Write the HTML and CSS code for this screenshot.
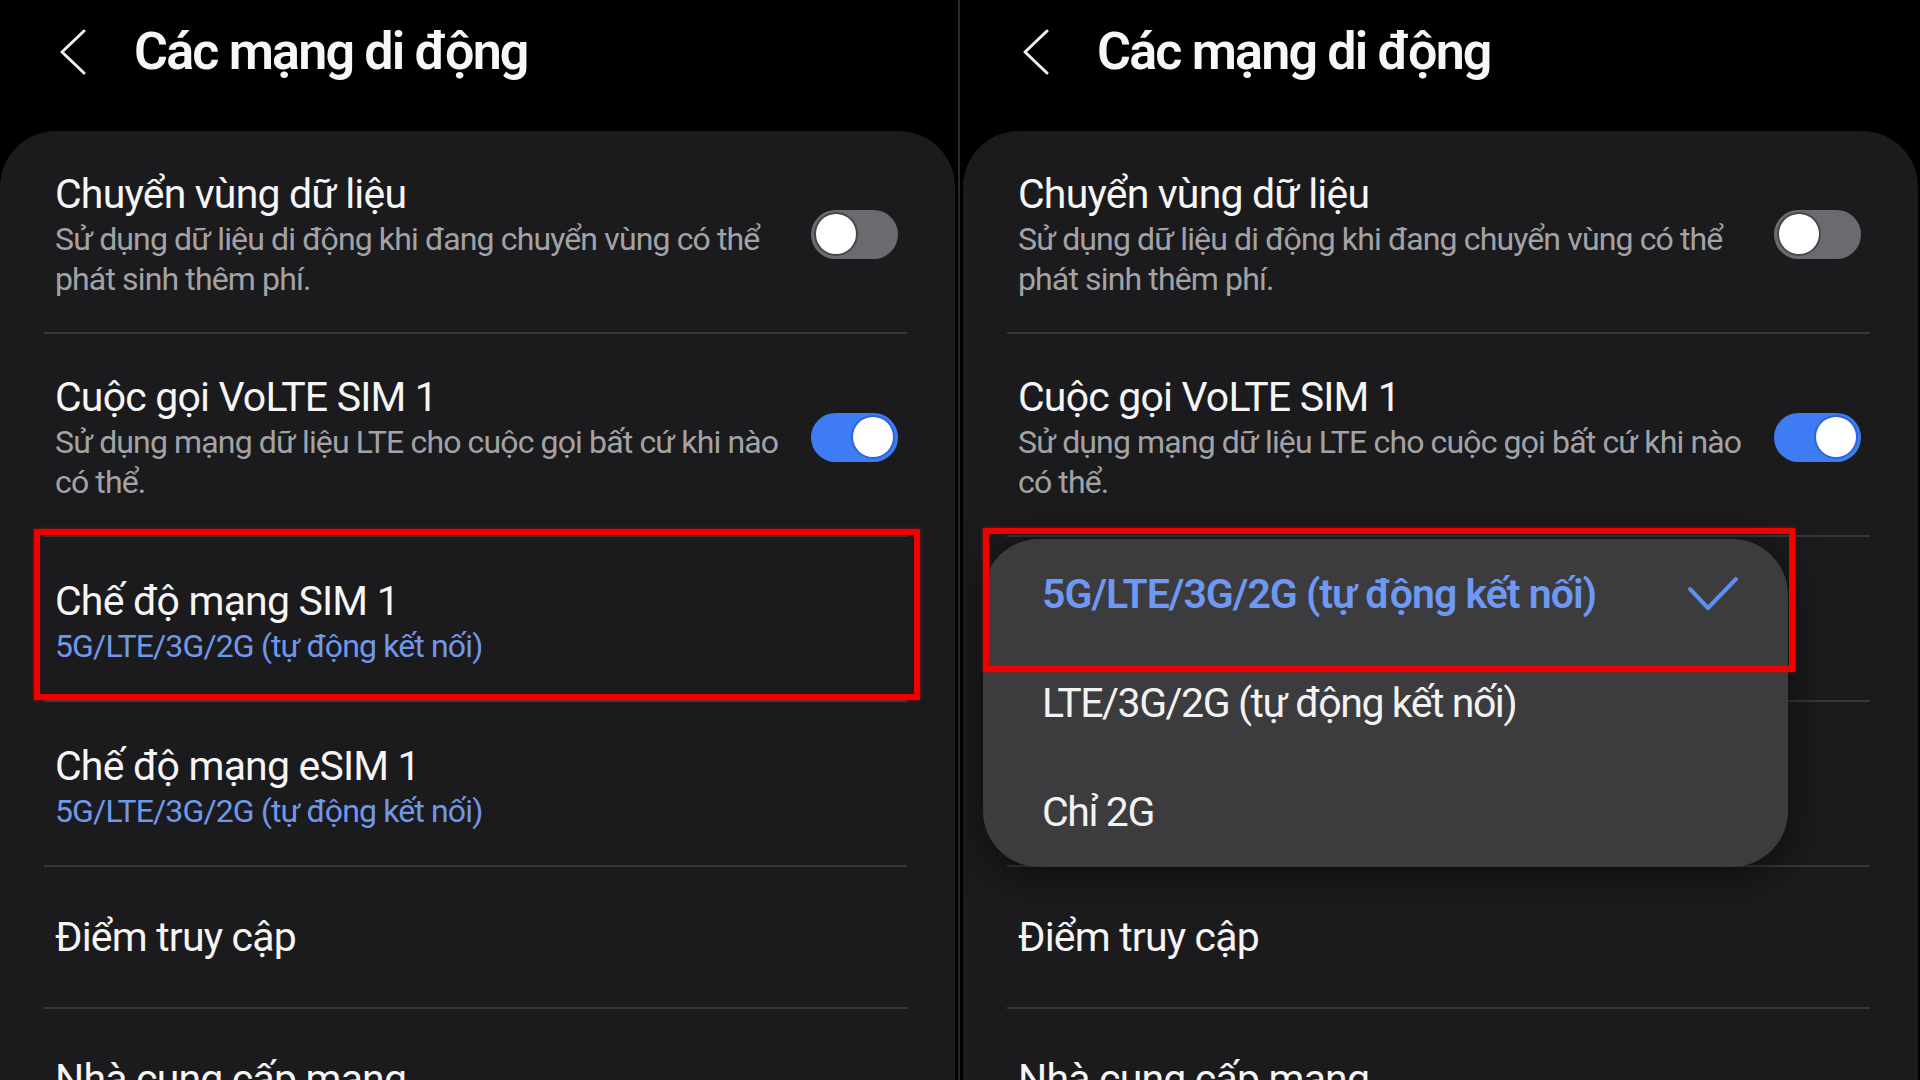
FILE: index.html
```html
<!DOCTYPE html>
<html lang="vi">
<head>
    <meta charset="UTF-8">
    <meta name="viewport" content="width=device-width, initial-scale=1.0">
    <title>Các mạng di động</title>
    <link rel="stylesheet" href="styles.css">
</head>
<body>
    <main class="screens">
        <!-- Screen 1: settings list -->
        <section class="screen">
            <header class="topbar">
                <svg class="back" width="28" height="46" viewBox="0 0 28 46">
                    <polyline points="25,2 3,23 25,44"/>
                </svg>
                <h1 class="page-title">Các mạng di động</h1>
            </header>

            <div class="card">
                <div class="row">
                    <div class="row-text">
                        <div class="row-title">Chuyển vùng dữ liệu</div>
                        <div class="row-sub">Sử dụng dữ liệu di động khi đang chuyển vùng có thể phát sinh thêm phí.</div>
                    </div>
                    <span class="switch"></span>
                </div>
                <div class="row">
                    <div class="row-text">
                        <div class="row-title">Cuộc gọi VoLTE SIM 1</div>
                        <div class="row-sub">Sử dụng mạng dữ liệu LTE cho cuộc gọi bất cứ khi nào có thể.</div>
                    </div>
                    <span class="switch on"></span>
                </div>
                <div class="row">
                    <div class="row-text">
                        <div class="row-title">Chế độ mạng SIM 1</div>
                        <div class="row-sub blue">5G/LTE/3G/2G (tự động kết nối)</div>
                    </div>
                </div>
                <div class="row">
                    <div class="row-text">
                        <div class="row-title">Chế độ mạng eSIM 1</div>
                        <div class="row-sub blue">5G/LTE/3G/2G (tự động kết nối)</div>
                    </div>
                </div>
                <div class="row single">
                    <div class="row-text">
                        <div class="row-title">Điểm truy cập</div>
                    </div>
                </div>
                <div class="row single">
                    <div class="row-text">
                        <div class="row-title">Nhà cung cấp mạng</div>
                    </div>
                </div>

                <div class="mark mark-left"></div>
            </div>
        </section>

        <!-- Screen 2: network mode menu open -->
        <section class="screen screen-right">
            <header class="topbar">
                <svg class="back" width="28" height="46" viewBox="0 0 28 46">
                    <polyline points="25,2 3,23 25,44"/>
                </svg>
                <h1 class="page-title">Các mạng di động</h1>
            </header>

            <div class="card">
                <div class="row">
                    <div class="row-text">
                        <div class="row-title">Chuyển vùng dữ liệu</div>
                        <div class="row-sub">Sử dụng dữ liệu di động khi đang chuyển vùng có thể phát sinh thêm phí.</div>
                    </div>
                    <span class="switch"></span>
                </div>
                <div class="row">
                    <div class="row-text">
                        <div class="row-title">Cuộc gọi VoLTE SIM 1</div>
                        <div class="row-sub">Sử dụng mạng dữ liệu LTE cho cuộc gọi bất cứ khi nào có thể.</div>
                    </div>
                    <span class="switch on"></span>
                </div>
                <div class="row">
                    <div class="row-text">
                        <div class="row-title">Chế độ mạng SIM 1</div>
                        <div class="row-sub blue">5G/LTE/3G/2G (tự động kết nối)</div>
                    </div>
                </div>
                <div class="row">
                    <div class="row-text">
                        <div class="row-title">Chế độ mạng eSIM 1</div>
                        <div class="row-sub blue">5G/LTE/3G/2G (tự động kết nối)</div>
                    </div>
                </div>
                <div class="row single">
                    <div class="row-text">
                        <div class="row-title">Điểm truy cập</div>
                    </div>
                </div>
                <div class="row single">
                    <div class="row-text">
                        <div class="row-title">Nhà cung cấp mạng</div>
                    </div>
                </div>

                <div class="menu">
                    <div class="menu-item selected">
                        <span>5G/LTE/3G/2G (tự động kết nối)</span>
                        <svg class="check" width="52" height="36" viewBox="0 0 52 36">
                            <polyline points="3,13 21,32 49,3"/>
                        </svg>
                    </div>
                    <div class="menu-item"><span>LTE/3G/2G (tự động kết nối)</span></div>
                    <div class="menu-item"><span>Chỉ 2G</span></div>
                </div>

                <div class="mark mark-right"></div>
            </div>
        </section>
    </main>
</body>
</html>
```

FILE: styles.css
```css
* {
    margin: 0;
    padding: 0;
    box-sizing: border-box;
}

body {
    font-family: 'Roboto', 'Noto Sans', sans-serif;
    background: #000;
    color: #f5f5f5;
    overflow: hidden;
}

.screens {
    display: flex;
    width: 1920px;
    height: 1080px;
}

.screen {
    width: 958px;
    height: 1080px;
    overflow: hidden;
    background: #000;
}

.screen-right {
    width: 962px;
    border-left: 2px solid #2a2a2c;
    padding-left: 3px;
}

/* Top bar */
.topbar {
    height: 131px;
    display: flex;
    align-items: flex-start;
    padding: 22px 0 0 59px;
    gap: 47px;
}

.back {
    margin-top: 7px;
    fill: none;
    stroke: #f0f0f0;
    stroke-width: 3;
    stroke-linecap: round;
    stroke-linejoin: round;
}

.page-title {
    font-size: 52px;
    line-height: 60px;
    font-weight: 600;
    letter-spacing: -0.035em;
    color: #f7f7f7;
}

/* Settings card */
.card {
    position: relative;
    width: 955px;
    height: 949px;
    background: #1b1b1d;
    border-radius: 56px 56px 0 0;
}

.row {
    display: flex;
    align-items: center;
    gap: 21px;
    min-height: 165px;
    margin: 0 48px 0 44px;
    padding: 38px 9px 33px 11px;
    border-bottom: 2px solid #38383b;
}

.row.single {
    min-height: 0;
    padding-top: 45px;
    padding-bottom: 45px;
}

.row-text {
    flex: 1;
}

.row-title {
    font-size: 41px;
    line-height: 50px;
    letter-spacing: -0.02em;
    color: #f5f5f5;
}

.row-sub {
    font-size: 32px;
    line-height: 40px;
    letter-spacing: -0.027em;
    color: #a3a3a7;
}

.row-sub.blue {
    color: #7098ea;
}

/* Toggle switch */
.switch {
    flex-shrink: 0;
    display: flex;
    align-items: center;
    width: 87px;
    height: 49px;
    padding: 0 5px;
    border-radius: 25px;
    background: #6b6b6f;
}

.switch::after {
    content: '';
    width: 40px;
    height: 40px;
    border-radius: 50%;
    background: #fff;
    box-shadow: 0 0 0 2px #48484c;
}

.switch.on {
    justify-content: flex-end;
    background: #3d7cf2;
}

.switch.on::after {
    box-shadow: 0 0 0 2px #2c66d6;
}

/* Dropdown menu */
.menu {
    position: absolute;
    left: 20px;
    top: 408px;
    width: 805px;
    height: 328px;
    background: #3c3c3e;
    border-radius: 56px;
    box-shadow: 0 6px 40px rgba(0, 0, 0, 0.55);
}

.menu-item {
    display: flex;
    align-items: center;
    justify-content: space-between;
    height: 109px;
    padding: 0 49px 0 59px;
    font-size: 41px;
    letter-spacing: -0.035em;
    color: #f2f2f2;
}

.menu-item.selected {
    font-weight: 600;
    letter-spacing: -0.024em;
    color: #6f98f2;
}

.check {
    fill: none;
    stroke: #5b8ff2;
    stroke-width: 4;
    stroke-linecap: round;
    stroke-linejoin: round;
}

/* Red annotation boxes */
.mark {
    position: absolute;
    border: 6px solid #f20000;
    box-shadow: 0 0 3px rgba(255, 0, 0, 0.6);
}

.mark-left {
    left: 34px;
    top: 398px;
    width: 886px;
    height: 171px;
}

.mark-right {
    left: 20px;
    top: 397px;
    width: 812px;
    height: 144px;
}
```
